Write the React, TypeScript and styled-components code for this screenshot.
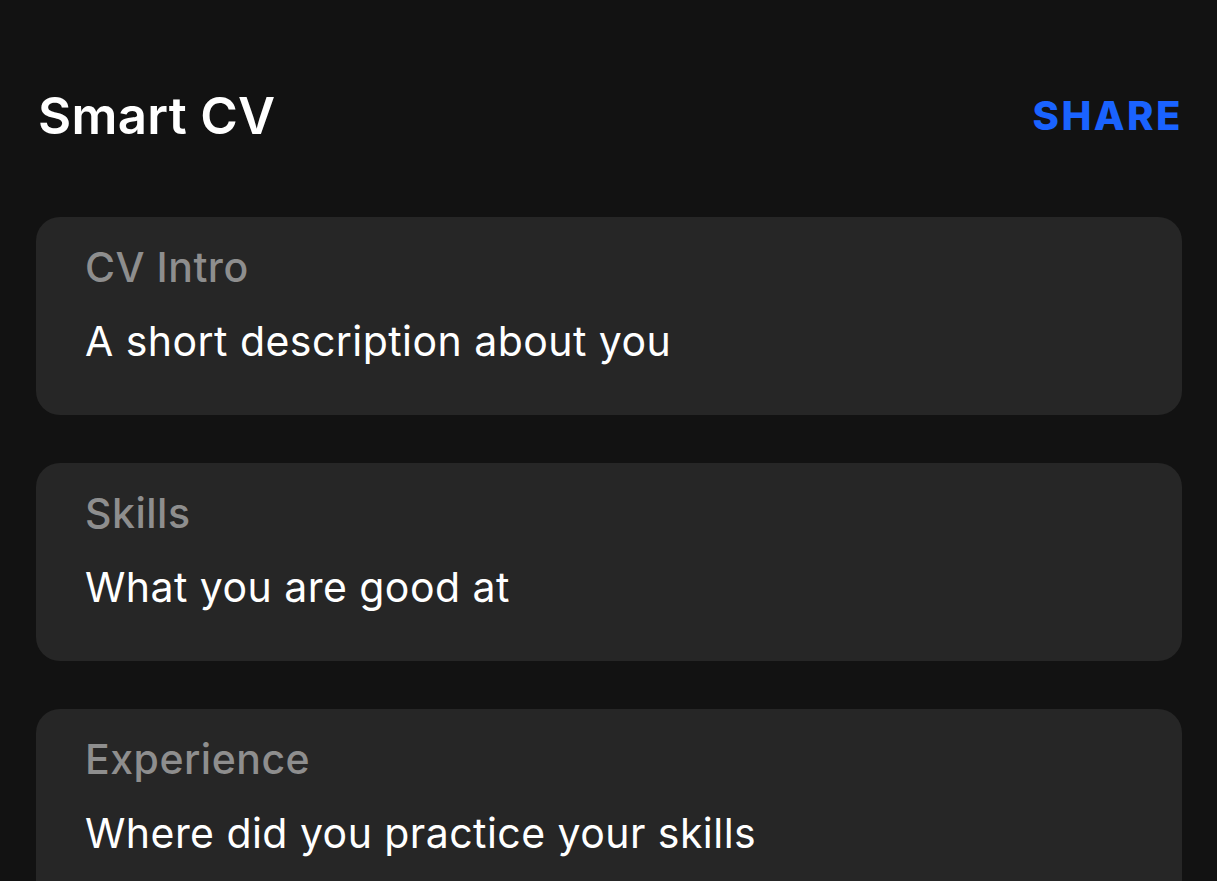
import React from 'react';
import styled, { createGlobalStyle } from 'styled-components';

const GlobalStyle = createGlobalStyle`
  html, body {
    margin: 0;
    padding: 0;
    background: #121212;
  }
  body {
    font-family: Inter, "Noto Sans", "Liberation Sans", sans-serif;
    -webkit-font-smoothing: antialiased;
  }
`;

const Page = styled.div`
  height: 881px;
  overflow: hidden;
  padding: 0 35px 0 36px;
  background: #121212;
  box-sizing: border-box;
`;

const Header = styled.header`
  display: flex;
  align-items: center;
  justify-content: space-between;
  height: 217px;
  padding: 13px 0 0 2px;
  box-sizing: border-box;
`;

const Title = styled.h1`
  margin: 0;
  font-size: 51px;
  font-weight: 600;
  letter-spacing: 0.3px;
  color: #ffffff;
`;

const ShareButton = styled.button`
  border: none;
  background: none;
  padding: 0;
  margin-right: -1px;
  font-family: inherit;
  font-size: 40px;
  font-weight: 800;
  letter-spacing: 2.5px;
  color: #1a63ff;
  cursor: pointer;
`;

const CardList = styled.ul`
  list-style: none;
  margin: 0;
  padding: 0;
  display: flex;
  flex-direction: column;
  gap: 48px;
`;

const Card = styled.li`
  background: #262626;
  border-radius: 24px;
  min-height: 198px;
  padding: 22px 50px 0 49px;
  box-sizing: border-box;
`;

const Label = styled.div`
  font-size: 41px;
  font-weight: 500;
  line-height: 56px;
  letter-spacing: 0.5px;
  color: #8e8e8e;
`;

const Hint = styled.div`
  margin-top: 18px;
  font-size: 41px;
  font-weight: 400;
  line-height: 56px;
  letter-spacing: 0.45px;
  color: #ffffff;
`;

const sections = [
  { label: 'CV Intro', hint: 'A short description about you' },
  { label: 'Skills', hint: 'What you are good at' },
  { label: 'Experience', hint: 'Where did you practice your skills' },
];

const App: React.FC = () => {
  return (
    <>
      <GlobalStyle />
      <Page>
        <Header>
          <Title>Smart CV</Title>
          <ShareButton>SHARE</ShareButton>
        </Header>
        <CardList>
          {sections.map((s) => (
            <Card key={s.label}>
              <Label>{s.label}</Label>
              <Hint>{s.hint}</Hint>
            </Card>
          ))}
        </CardList>
      </Page>
    </>
  );
};

export default App;
